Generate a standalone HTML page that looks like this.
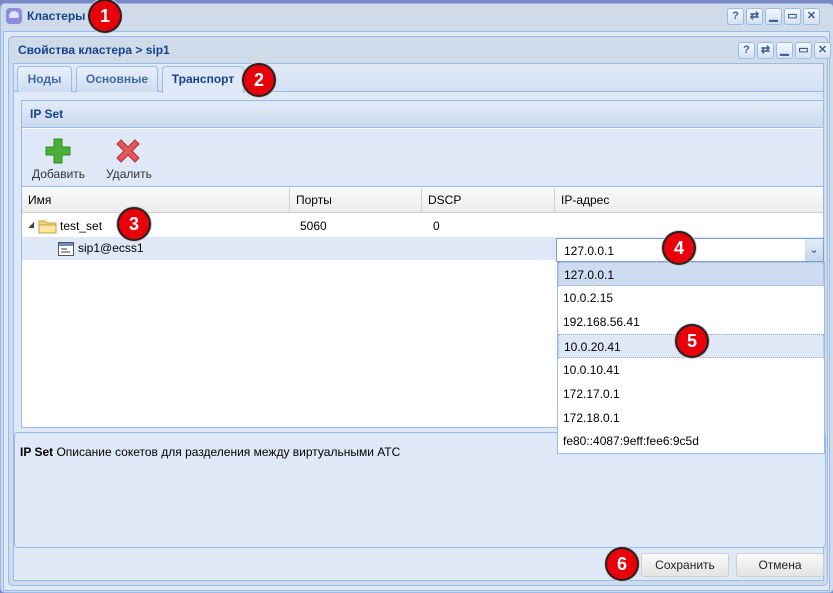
<!DOCTYPE html>
<html><head><meta charset="utf-8"><style>
*{box-sizing:border-box;margin:0;padding:0}
body{width:833px;height:590px;overflow:hidden;background:#7d86c4;font-family:"Liberation Sans",sans-serif;font-size:12px;color:#000;position:relative}
.a{position:absolute}
.win{border:1px solid #99bbe8;border-radius:5px;background:#cfdbe8}
.tb{width:17px;height:17px;border:1px solid #99bbe8;border-radius:3px;background:linear-gradient(#f4f8fd,#d6e2f1);color:#3d5f8f;font-size:11px;font-weight:bold;text-align:center;line-height:15px}
.badge{width:34px;height:34px;border-radius:50%;background:#e8000b;border:2px solid #222;box-shadow:0 0 0 1px #ccc;color:#fff;font-weight:bold;font-size:18px;text-align:center;line-height:30px}
.tab{height:26px;border:1px solid #99bbe8;border-bottom:none;border-radius:4px 4px 0 0;background:linear-gradient(#e9f0fa,#cddcf0);color:#416aa3;font-weight:bold;font-size:12px;text-align:center;line-height:24px}
.hd{color:#000;font-size:12px;line-height:24px;padding-left:6px;border-right:1px solid #d0d0d0}
.it{left:558px;width:266px;height:24px;line-height:24px;padding-left:5px;font-size:12px}
.btn{height:24px;border:1px solid #cfcfcf;border-radius:3px;background:linear-gradient(#fafafa,#e4e4e4);text-align:center;line-height:22px;color:#222}
</style></head><body>
<!-- outer window -->
<div class="a win" style="left:0;top:3px;width:834px;height:590px"></div>
<div class="a" style="left:6px;top:8px;width:16px;height:16px;border-radius:4px;background:#8a8ee0"></div>
<div class="a" style="left:9px;top:11px;width:10px;height:7px;border-radius:5px 5px 2px 2px;background:#dfe2ff"></div>
<div class="a" style="left:27px;top:9px;font-weight:bold;color:#15428b;font-size:12px">Кластеры</div>
<div class="a tb" style="left:727px;top:8px">?</div>
<div class="a tb" style="left:746px;top:8px">⇄</div>
<div class="a tb" style="left:765px;top:8px">▁</div>
<div class="a tb" style="left:784px;top:8px">▭</div>
<div class="a tb" style="left:803px;top:8px">✕</div>
<div class="a" style="left:3px;top:31px;width:827px;height:560px;border:1px solid #99bbe8;background:#dfe8f6"></div>
<!-- inner window -->
<div class="a win" style="left:8px;top:36px;width:820px;height:550px"></div>
<div class="a" style="left:18px;top:43px;font-weight:bold;color:#15428b;font-size:12px">Свойства кластера &gt; sip1</div>
<div class="a tb" style="left:738px;top:42px">?</div>
<div class="a tb" style="left:757px;top:42px">⇄</div>
<div class="a tb" style="left:776px;top:42px">▁</div>
<div class="a tb" style="left:795px;top:42px">▭</div>
<div class="a tb" style="left:814px;top:42px">✕</div>
<div class="a" style="left:13px;top:63px;width:811px;height:518px;border:1px solid #99bbe8;background:#dfe8f6"></div>
<div class="a" style="left:14px;top:64px;width:809px;height:28px;background:linear-gradient(#e1eaf7,#d2e0f2);border-bottom:1px solid #99bbe8"></div>
<div class="a tab" style="left:17px;top:66px;width:55px">Ноды</div>
<div class="a tab" style="left:76px;top:66px;width:82px">Основные</div>
<div class="a tab" style="left:162px;top:66px;width:82px;height:27px;background:#dfe8f6;color:#15428b">Транспорт</div>
<!-- IP set panel -->
<div class="a" style="left:21px;top:100px;width:803px;height:328px;border:1px solid #99bbe8;background:#fff"></div>
<div class="a" style="left:22px;top:101px;width:801px;height:27px;background:linear-gradient(#e3ebf7,#cbdaef);border-bottom:1px solid #99bbe8;font-weight:bold;color:#15428b;padding:6px 0 0 8px">IP Set</div>
<div class="a" style="left:22px;top:129px;width:801px;height:58px;background:#dfe8f6;border-bottom:1px solid #99bbe8"></div>
<svg class="a" style="left:44px;top:137px" width="28" height="28"><path d="M10 2h8v8h8v8h-8v8h-8v-8H2v-8h8z" fill="#4caf37" stroke="#2f8a21"/></svg>
<svg class="a" style="left:114px;top:137px" width="28" height="28"><path d="M3 7l4-4 7 7 7-7 4 4-7 7 7 7-4 4-7-7-7 7-4-4 7-7z" fill="#e25b5b" stroke="#b92c2c"/></svg>
<div class="a" style="left:32px;top:167px;color:#333">Добавить</div>
<div class="a" style="left:106px;top:167px;color:#333">Удалить</div>
<!-- grid header -->
<div class="a" style="left:22px;top:188px;width:801px;height:25px;background:linear-gradient(#fafafa,#ececec);border-bottom:1px solid #d0d0d0"></div>
<div class="a hd" style="left:22px;top:188px;width:268px">Имя</div>
<div class="a hd" style="left:290px;top:188px;width:132px">Порты</div>
<div class="a hd" style="left:422px;top:188px;width:133px">DSCP</div>
<div class="a hd" style="left:555px;top:188px;width:268px;border:none">IP-адрес</div>
<div class="a" style="left:28px;top:220px;font-size:8px;color:#444">◢</div>
<svg class="a" style="left:38px;top:218px" width="20" height="16"><path d="M1 3h6l2 2h9v10H1z" fill="#f4d77a" stroke="#c9a23c"/><path d="M1 7h17v8H1z" fill="#fbe7a2" stroke="#c9a23c"/></svg>
<div class="a" style="left:60px;top:219px">test_set</div>
<div class="a" style="left:300px;top:219px">5060</div>
<div class="a" style="left:433px;top:219px">0</div>
<div class="a" style="left:22px;top:237px;width:801px;height:23px;background:#dfe8f6"></div>
<svg class="a" style="left:58px;top:242px" width="16" height="14"><rect x=".5" y=".5" width="15" height="13" fill="#fff" stroke="#555"/><rect x="1" y="1" width="14" height="3" fill="#6d8dc0"/><path d="M3 7h6M3 10h9" stroke="#333"/></svg>
<div class="a" style="left:78px;top:241px">sip1@ecss1</div>
<!-- combo -->
<div class="a" style="left:556px;top:238px;width:250px;height:24px;border:1px solid #7ba0d3;background:#fff;padding:5px 0 0 7px">127.0.0.1</div>
<div class="a" style="left:805px;top:238px;width:19px;height:24px;border:1px solid #7ba0d3;border-left:none;background:linear-gradient(#e3ebf7,#c6d6ee);color:#15428b;text-align:center;font-size:11px;line-height:22px">⌄</div>
<!-- description panel -->
<div class="a" style="left:14px;top:432px;width:812px;height:116px;border:1px solid #99bbe8;border-radius:4px;background:#dfe8f6;padding:12px 0 0 5px"><b>IP Set</b> Описание сокетов для разделения между виртуальными АТС</div>
<!-- dropdown -->
<div class="a" style="left:557px;top:262px;width:268px;height:192px;border:1px solid #99bbe8;background:#fff"></div>
<div class="a it" style="top:262px;background:#cddcf0;border:1px dotted #99aacc">127.0.0.1</div>
<div class="a it" style="top:286px">10.0.2.15</div>
<div class="a it" style="top:310px">192.168.56.41</div>
<div class="a it" style="top:334px;background:#dfe8f6;border:1px dotted #99aacc">10.0.20.41</div>
<div class="a it" style="top:358px">10.0.10.41</div>
<div class="a it" style="top:382px">172.17.0.1</div>
<div class="a it" style="top:406px">172.18.0.1</div>
<div class="a it" style="top:429px">fe80::4087:9eff:fee6:9c5d</div>
<!-- buttons -->
<div class="a btn" style="left:641px;top:553px;width:88px">Сохранить</div>
<div class="a btn" style="left:736px;top:553px;width:88px">Отмена</div>
<!-- badges -->
<div class="a badge" style="left:88px;top:-1px">1</div>
<div class="a badge" style="left:242px;top:63px">2</div>
<div class="a badge" style="left:117px;top:207px">3</div>
<div class="a badge" style="left:662px;top:231px">4</div>
<div class="a badge" style="left:675px;top:324px">5</div>
<div class="a badge" style="left:605px;top:547px">6</div>
</body></html>
